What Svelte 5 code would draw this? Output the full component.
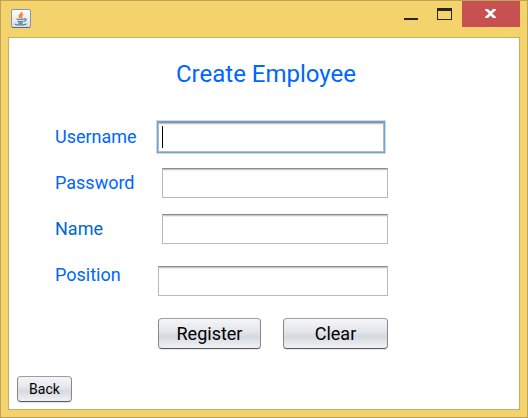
<script>
  let username = $state('');
  let password = $state('');
  let name = $state('');
  let position = $state('');

  function clearAll() {
    username = password = name = position = '';
  }
</script>

<div class="window">
  <header class="titlebar">
    <svg class="app-icon" width="20" height="19" viewBox="0 0 20 19" aria-hidden="true">
      <defs>
        <linearGradient id="tile" x1="0" y1="0" x2="0" y2="1">
          <stop offset="0" stop-color="#ffffff" />
          <stop offset="1" stop-color="#d9dde2" />
        </linearGradient>
      </defs>
      <rect x="0.5" y="0.5" width="19" height="18" rx="1.5" fill="url(#tile)" stroke="#8497a8" />
      <path d="M1 18.5h18" stroke="#4f6f8c" />
      <path d="M10.800 3c.5 2-3.300 2.600-2.600 4.300.2.600.9 1 1.200 1.700M12.200 5.200c-1.800.8-2.400 1.600-1.600 2.500.5.600.2 1-.4 1.500" fill="none" stroke="#ee8434" stroke-width="1.600" />
      <path d="M5.500 9.800c1.500.8 6.500.8 8 0M6.500 12c1.500.7 4.500.7 6 0M7.200 13.700c1.200.6 3.400.6 4.600 0M13.500 10c2-.5 2.200 1.600-.3 2.300M4 14.800c1 1.600 10 1.500 11.500-.2" fill="none" stroke="#55809f" stroke-width="1.300" />
    </svg>
    <div class="controls">
      <button class="ctl" aria-label="Minimize">
        <svg width="14" height="12" viewBox="0 0 14 12"><path d="M0 10h14v2H0z" fill="#26262a" /></svg>
      </button>
      <button class="ctl" aria-label="Maximize">
        <svg width="16" height="12" viewBox="0 0 16 12"><path fill-rule="evenodd" d="M0 0h15v12H0zM1 3v8h13V3z" fill="#26262a" /></svg>
      </button>
      <button class="ctl close" aria-label="Close">
        <svg width="12" height="10" viewBox="0 0 12 10"><path d="M0 0h3l2.500 2.600L8 0h3v1L7.200 4.500 11 8v1H8L5.500 6.400 3 9H0V8l3.800-3.500L0 1z" fill="#fff" /></svg>
      </button>
    </div>
  </header>

  <main class="panel">
    <h1>Create Employee</h1>
    <form onsubmit={(e) => e.preventDefault()}>
      <div class="row">
        <label for="username">Username</label>
        <div class="field focused">
          <input id="username" type="text" autocomplete="off" bind:value={username} />
          {#if !username}<span class="caret"></span>{/if}
        </div>
      </div>
      <div class="row">
        <label for="password">Password</label>
        <div class="field inset"><input id="password" type="password" bind:value={password} /></div>
      </div>
      <div class="row">
        <label class="deep" for="name">Name</label>
        <div class="field inset"><input id="name" type="text" bind:value={name} /></div>
      </div>
      <div class="row last">
        <label for="position">Position</label>
        <div class="field"><input id="position" type="text" bind:value={position} /></div>
      </div>
      <div class="actions">
        <button class="metal" type="submit">Register</button>
        <button class="metal" type="button" onclick={clearAll}>Clear</button>
      </div>
    </form>
    <button class="metal back" type="button">Back</button>
  </main>
</div>

<style>
  :global(body) {
    margin: 0;
  }

  .window {
    box-sizing: border-box;
    min-height: 100vh;
    display: flex;
    flex-direction: column;
    padding: 0 7px 7px;
    border: 1px solid #bda455;
    background: #f5d36c;
    font-family: Roboto, 'Liberation Sans', sans-serif;
  }

  .titlebar {
    display: flex;
    justify-content: space-between;
    height: 36px;
  }

  .app-icon {
    margin: 8px 0 0 3px;
  }

  .controls {
    display: flex;
    height: 26px;
  }

  .ctl {
    display: flex;
    align-items: center;
    justify-content: center;
    width: 34px;
    padding: 0;
    border: 0;
    background: transparent;
  }

  .ctl.close {
    width: 58px;
    background: #c75050;
  }

  .panel {
    flex: 1;
    display: flex;
    flex-direction: column;
    border: 1px solid #c5ae62;
    background: #fff;
  }

  h1 {
    margin: 20px 0 0 4px;
    text-align: center;
    font-size: 24px;
    line-height: 32px;
    font-weight: 400;
    color: #0066ff;
  }

  form {
    padding: 32px 131px 0 46px;
  }

  .row {
    display: flex;
    align-items: flex-start;
    height: 46px;
  }

  label {
    width: 103px;
    font-size: 18px;
    line-height: 30px;
    color: #0066ff;
  }

  label.deep {
    color: #0066cc;
  }

  .field {
    position: relative;
    flex: 1;
    display: flex;
  }

  .inset {
    margin-left: 4px;
  }

  .focused {
    margin-right: 4px;
  }

  .last {
    height: 58px;
  }

  .last .field {
    margin-top: 6px;
  }

  input {
    box-sizing: border-box;
    width: 100%;
    height: 30px;
    padding: 0 4px;
    border: 1px solid #b9b9b9;
    border-top-color: #8c8c8c;
    border-radius: 0;
    outline: none;
    background: linear-gradient(#c8c8c8 1px, #eeeeee 1px, #eeeeee 2px, #fff 2px);
    font: 18px Roboto, 'Liberation Sans', sans-serif;
  }

  .focused input {
    box-shadow: 0 0 0 1px #73a4d1, 0 0 0 2px #c5dbef;
  }

  .caret {
    position: absolute;
    left: 4px;
    top: 4px;
    width: 1px;
    height: 22px;
    background: #000;
  }

  .actions {
    display: grid;
    grid-template-columns: 103fr 105fr;
    gap: 22px;
    margin-left: 103px;
  }

  .metal {
    height: 31px;
    padding: 0;
    border: 1px solid #85878c;
    border-top-color: #9c9ea3;
    border-bottom-color: #585b62;
    border-radius: 4px;
    background: linear-gradient(#f5f6f8, #e3e5ea 45%, #d6d9df 60%, #f0f2f6);
    box-shadow: 0 1px 0 #e4e6ea;
    font: 18px Roboto, 'Liberation Sans', sans-serif;
    color: #000;
  }

  .back {
    width: 55px;
    height: 26px;
    margin: auto 0 7px 8px;
    font-size: 14px;
  }
</style>
